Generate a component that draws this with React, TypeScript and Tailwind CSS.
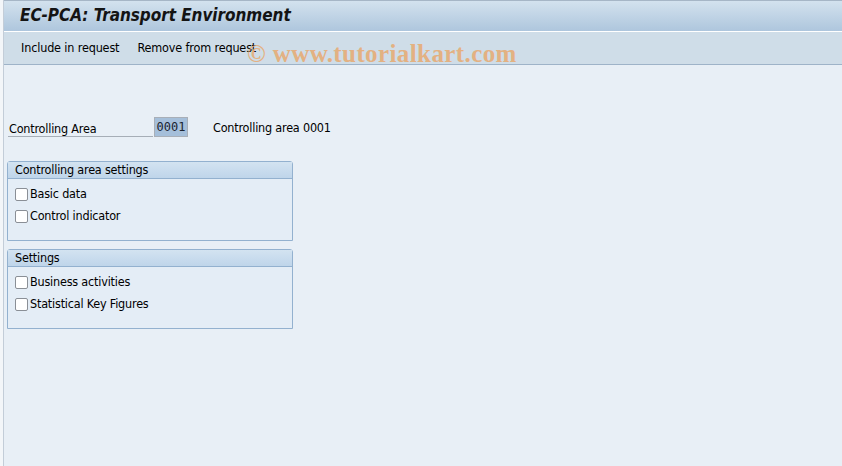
import React from "react";

const font = { fontFamily: "Tahoma, 'DejaVu Sans Condensed', 'Liberation Sans', sans-serif" };

function Checkbox({ label }: { label: string }) {
  return (
    <label className="flex items-center h-[22px] text-[12.5px] tracking-[-0.2px] text-black">
      <span className="w-[13px] h-[13px] border border-[#8a8f96] bg-white rounded-[2px] mr-[2px]" />
      <span>{label}</span>
    </label>
  );
}

function GroupBox({ title, items }: { title: string; items: string[] }) {
  return (
    <div className="w-[286px] h-[80px] border border-[#93b1cf] rounded-t-[3px] bg-[#e4edf6]">
      <div className="h-[17px] px-[7px] pt-[1px] flex items-center text-[12.5px] tracking-[-0.2px] text-black bg-gradient-to-b from-[#d3e3f1] to-[#bfd5ea] border-b border-[#93b1cf]">
        {title}
      </div>
      <div className="px-[7px] pt-[4px]">
        {items.map((i) => (
          <Checkbox key={i} label={i} />
        ))}
      </div>
    </div>
  );
}

export default function App() {
  return (
    <div className="w-[842px] h-[466px] flex bg-[#f3f6f9] overflow-hidden" style={font}>
      <div className="w-[3px] shrink-0" />
      <div className="flex-1 flex flex-col border-l border-[#c3cdd8] bg-[#e8eff6]">
        {/* title bar */}
        <div className="h-[32px] shrink-0 border-t border-[#a6b6c6] border-b border-b-white bg-gradient-to-b from-[#d3e2ee] to-[#aec6dd] flex items-center pl-[16px]">
          <h1 className="text-[17px] font-bold italic text-[#141414] tracking-[-0.05px]">
            EC-PCA: Transport Environment
          </h1>
        </div>
        {/* toolbar */}
        <div className="h-[33px] shrink-0 bg-[#cfdde8] border-b border-[#9eb3c8] flex items-center pl-[17px] text-[12.5px] tracking-[-0.15px] text-black relative">
          <span>Include in request</span>
          <span className="ml-[18px]">Remove from request</span>
          <span
            className="absolute left-[243px] top-[3px] text-[25px] font-bold text-[#e6ad78] opacity-90 tracking-[0.4px]"
            style={{ fontFamily: "'Liberation Serif', 'DejaVu Serif', serif" }}
          >
            © www.tutorialkart.com
          </span>
        </div>
        {/* content */}
        <div className="pl-[4px] pt-[52px]">
          <div className="flex items-center h-[20px]">
            <div className="w-[145px] h-[20px] border-b border-[#a6aeb7] flex items-center pt-[5px] pl-[1px] text-[12.5px] tracking-[-0.2px] text-black">
              Controlling Area
            </div>
            <div
              className="ml-[1px] w-[34px] h-[20px] border border-[#a8afb8] bg-[#a5bfda] text-[12px] text-[#1a2430] flex items-center justify-center"
              style={{ fontFamily: "'DejaVu Sans Mono', monospace" }}
            >
              0001
            </div>
            <span className="ml-[25px] pt-[2px] text-[12.5px] tracking-[-0.2px] text-black">Controlling area 0001</span>
          </div>
          <div className="mt-[24px] ml-[-1px] flex flex-col gap-[8px]">
            <GroupBox title="Controlling area settings" items={["Basic data", "Control indicator"]} />
            <GroupBox title="Settings" items={["Business activities", "Statistical Key Figures"]} />
          </div>
        </div>
      </div>
    </div>
  );
}
